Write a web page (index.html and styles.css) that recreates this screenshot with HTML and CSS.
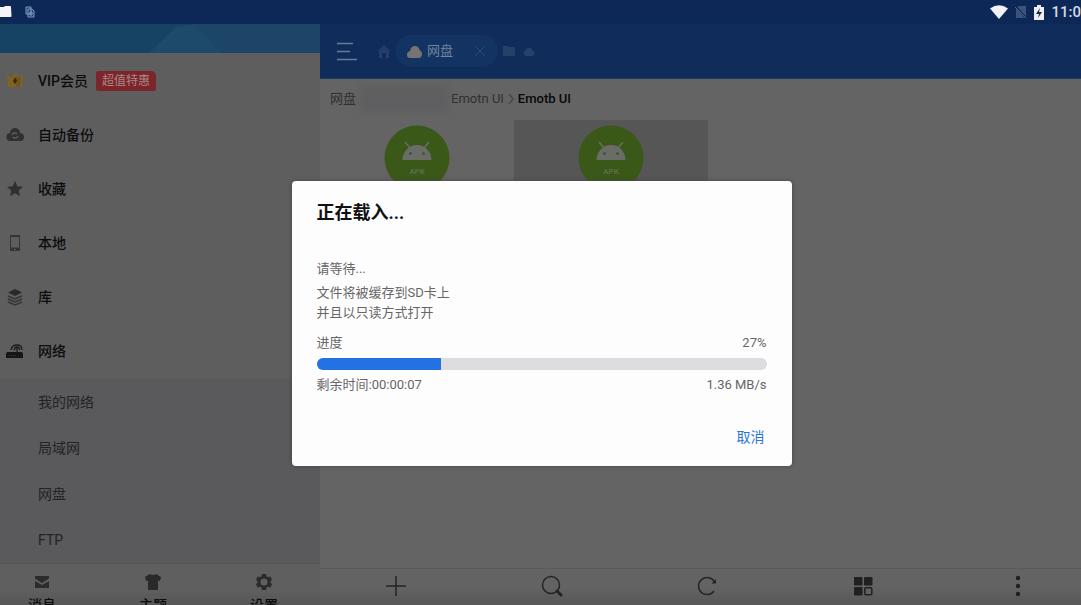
FILE: index.html
```html
<!DOCTYPE html>
<html lang="zh-CN">
<head>
<meta charset="utf-8">
<title>文件管理器</title>
<link rel="stylesheet" href="styles.css">
</head>
<body>
<header class="status">
  <div class="status-left">
    <svg width="12" height="12" viewBox="0 0 12 12"><path d="M0 1h4l1-1h5q1 0 1 1l.5 9q0 1-1 1H0z" fill="#f4f5f9"/></svg>
    <svg width="10" height="12" viewBox="0 0 10 12"><path d="M1 1h5v7H1zM3 3h4l2 2v6H3z" fill="#1c3d6e" stroke="#7f9cc0"/><path d="M5 6h2v3H5z" fill="none" stroke="#7f9cc0"/></svg>
  </div>
  <div class="status-right">
    <svg width="18" height="14" viewBox="0 0 17 14" preserveAspectRatio="none"><path d="M0 3.500Q8.500-3 17 3.500L8.500 14z" fill="#f0f2f8"/></svg>
    <svg width="12" height="14" viewBox="0 0 12 14"><path d="M4 1h7v12H1V4z" fill="#38557d"/><path d="M0 1l12 13" stroke="#0e2856" stroke-width="2"/><path d="M0 2l11 11" stroke="#4b6688"/></svg>
    <svg width="10" height="15" viewBox="0 0 10 15"><path d="M3 0h4v2h3v13H0V2h3z" fill="#eceef4"/><path d="M6 3L2 9h3l-1 4 4-6H5z" fill="#172746"/></svg>
    <span class="clock">11:0</span>
  </div>
</header>
<div class="app">
  <aside class="sidebar">
    <div class="banner"><svg width="100%" height="30" viewBox="0 0 320 30" preserveAspectRatio="none"><path d="M148 30L176 3l20-3 26 30z" fill="#1d496b"/><path d="M196 0h124v30h-98z" fill="#1d4568"/></svg></div>
    <nav class="menu">
      <a href="#"><svg width="18" height="18" viewBox="0 0 18 18"><path d="M1 3l4 3 4-5 4 4 4-3-1 13H2z" fill="#806321"/><path d="M10 4l5 2-1 9h-4z" fill="#6f5528"/><path d="M9 5l2 4-2 3-2-3z" fill="#352a12"/></svg>VIP会员<span class="promo">超值特惠</span></a>
      <a href="#"><svg width="18" height="18" viewBox="0 0 18 18"><path d="M5 15a4 4 0 01-1-8 5 5 0 0110 0 4 4 0 010 8z" fill="#303030"/><path d="M6 9a3 3 0 015-1M12 10a3 3 0 01-5 1" fill="none" stroke="#5d5d5d" stroke-width="1.500"/></svg>自动备份</a>
      <a href="#"><svg width="18" height="18" viewBox="0 0 18 18"><path d="M9 1l2.300 5.200 5.700.6-4.200 3.800 1.200 5.600L9 13.300l-5 2.900 1.200-5.600L1 6.800l5.700-.6z" fill="#303030"/></svg>收藏</a>
      <a href="#"><svg width="18" height="18" viewBox="0 0 18 18"><path fill-rule="evenodd" d="M5 1h8q1 0 1 1v14q0 1-1 1H5q-1 0-1-1V2q0-1 1-1zm0 2v10.500h8V3zm3 12v1h2v-1z" fill="#343434"/></svg>本地</a>
      <a href="#"><svg width="18" height="18" viewBox="0 0 18 18"><path d="M9 1l7 3.500L9 8 2 4.500z" fill="#292929"/><path d="M2 8l7 3 7-3M2 11l7 3 7-3M2 14l7 3 7-3" fill="none" stroke="#363636" stroke-width="1.500"/></svg>库</a>
      <a href="#"><svg width="18" height="18" viewBox="0 0 18 18"><path d="M1 10h15l1 2v4H0v-4z" fill="#151515"/><path d="M5 8q1-5 6-5t5 5M8 8q1-3 3-3t3 3M11 6v5" fill="none" stroke="#1b1b1b" stroke-width="1.300"/><path d="M3 13.500h7" stroke="#333" stroke-dasharray="1 1"/></svg>网络</a>
    </nav>
    <nav class="submenu">
      <a href="#">我的网络</a>
      <a href="#">局域网</a>
      <a href="#">网盘</a>
      <a href="#">FTP</a>
    </nav>
    <div class="side-tabs">
      <button><svg width="16" height="16" viewBox="0 0 16 16"><path d="M1 2h14v2.500L8 9 1 4.500zM1 7l7 4 7-4v7H1z" fill="#2c2c2c"/></svg>消息</button>
      <button><svg width="18" height="16" viewBox="0 0 18 16"><path d="M6 0q3 2 6 0l5 3-1 4-2-.5V16H4V6.500L2 7 1 3z" fill="#292929"/></svg>主题</button>
      <button><svg width="16" height="16" viewBox="0 0 16 16"><path fill-rule="evenodd" d="M6 0h4l.7 2.600 1 .6L14.300 2.500l1.700 3L14.200 8l1.800 2.500-1.700 3-2.600-.7-1 .6L10 16H6l-.7-2.600-1-.6-2.600.7-1.700-3L1.800 8 0 5.500l1.700-3 2.600.7 1-.6zM8 4.500a3.500 3.500 0 100 7 3.500 3.500 0 000-7z" fill="#2b2b2b"/></svg>设置</button>
    </div>
  </aside>
  <main class="main">
    <div class="toolbar">
      <button class="menu-button" aria-label="菜单"><svg width="21" height="20" viewBox="0 0 21 20"><path d="M1 2.500h16M1 10.500h13M1 18.500h20" stroke="#687b96" stroke-width="1.500"/></svg></button>
      <button class="home" aria-label="主页"><svg width="12" height="13" viewBox="0 0 12 13"><path d="M6 0l6 6-1 1v6H8V8H4v5H1V7L0 6z" fill="#243f67"/></svg></button>
      <div class="tab"><svg width="15" height="13" viewBox="0 0 15 13"><path d="M3 13a3 3 0 01-3-3.500Q0 7 3 6 4 1 8 1q3.500 0 4.500 4Q15 6 15 9.500 15 12 12 13z" fill="#777374"/></svg><span>网盘</span><button class="close" aria-label="关闭"><svg width="12" height="12" viewBox="0 0 12 12"><path d="M1 1l10 10M11 1L1 11" stroke="#2b4a70"/></svg></button></div>
      <div class="mini"><svg width="12" height="10" viewBox="0 0 12 10"><path d="M0 0h5l1 1h6v9H0z" fill="#22426a"/></svg><svg width="12" height="10" viewBox="0 0 12 10"><path d="M2.500 10a3 3 0 010-5.500 3.600 3.600 0 017 0 3 3 0 010 5.500z" fill="#22426a"/></svg></div>
    </div>
    <nav class="crumbs">
      <a href="#">网盘</a><span class="hidden-name"></span><a href="#">Emotn UI</a><svg width="6" height="10" viewBox="0 0 6 10"><path d="M1 0l4 5-4 5" fill="none" stroke="#484848" stroke-width="1.500"/></svg><b>Emotb UI</b>
    </nav>
    <div class="files">
      <button class="file" aria-label="APK 文件"><svg width="66" height="66" viewBox="0 0 66 66"><circle cx="33" cy="33" r="32.500" fill="#3a5818"/><path d="M18.500 35a14.500 15 0 0129 0z" fill="#6a6c68"/><path d="M21 17l5 6M45 17l-5 6" stroke="#6a6c68" stroke-width="1.500"/><circle cx="26.500" cy="28.500" r="1.500" fill="#465433"/><circle cx="39.500" cy="28.500" r="1.500" fill="#465433"/><text x="33" y="49" text-anchor="middle" class="apk">APK</text></svg></button>
      <button class="file selected" aria-label="APK 文件"><svg width="66" height="66" viewBox="0 0 66 66"><circle cx="33" cy="33" r="32.500" fill="#3a5818"/><path d="M18.500 35a14.500 15 0 0129 0z" fill="#6a6c68"/><path d="M21 17l5 6M45 17l-5 6" stroke="#6a6c68" stroke-width="1.500"/><circle cx="26.500" cy="28.500" r="1.500" fill="#465433"/><circle cx="39.500" cy="28.500" r="1.500" fill="#465433"/><text x="33" y="49" text-anchor="middle" class="apk">APK</text></svg></button>
    </div>
    <div class="actions">
      <button aria-label="新建"><svg width="22" height="22" viewBox="0 0 22 22"><path d="M11 1v20M1 11h20" stroke="#242424" stroke-width="1.500"/></svg></button>
      <button aria-label="搜索"><svg width="22" height="22" viewBox="0 0 22 22"><circle cx="10" cy="10" r="8.500" fill="none" stroke="#242424" stroke-width="1.500"/><path d="M16 16l4 4" stroke="#242424" stroke-width="3" stroke-linecap="round"/></svg></button>
      <button aria-label="刷新"><svg width="22" height="22" viewBox="0 0 22 22"><path d="M18.500 7a8.500 8.500 0 10-.5 9" fill="none" stroke="#242424" stroke-width="1.500"/><path d="M20 4v4.500h-4.500z" fill="#242424"/></svg></button>
      <button aria-label="窗口"><svg width="22" height="22" viewBox="0 0 22 22"><g fill="#202020"><rect x="2" y="2" width="8.500" height="8.500" rx="1"/><rect x="12" y="2" width="8.500" height="8.500" rx="1"/><rect x="2" y="12" width="8.500" height="8.500" rx="1"/></g><rect x="12.800" y="12.800" width="7" height="7" rx="1" fill="none" stroke="#202020" stroke-width="1.500"/></svg></button>
      <button aria-label="更多"><svg width="22" height="22" viewBox="0 0 22 22"><g fill="#202020"><circle cx="11" cy="3" r="2.200"/><circle cx="11" cy="11" r="2.200"/><circle cx="11" cy="19" r="2.200"/></g></svg></button>
    </div>
  </main>
</div>
<div class="overlay">
  <section class="dialog" role="dialog" aria-labelledby="dialog-title">
    <h1 id="dialog-title">正在载入...</h1>
    <p class="wait">请等待...</p>
    <p class="note">文件将被缓存到SD卡上<br>并且以只读方式打开</p>
    <div class="row"><label for="load">进度</label><span>27%</span></div>
    <progress id="load" max="450" value="124"></progress>
    <div class="row"><span>剩余时间:00:00:07</span><span>1.36 MB/s</span></div>
    <button class="cancel">取消</button>
  </section>
</div>
</body>
</html>
```
FILE: styles.css
```css
* { box-sizing: border-box; }
body {
  margin: 0;
  height: 100vh;
  display: flex;
  flex-direction: column;
  overflow: hidden;
  position: relative;
  background: #646464;
  color: #0c0c0c;
  font-family: Roboto, "Noto Sans CJK SC", sans-serif;
  font-size: 14px;
  line-height: 20px;
}
svg { display: block; flex: none; }
a { color: inherit; text-decoration: none; }
button { border: 0; padding: 0; margin: 0; background: none; color: inherit; font: inherit; }

.status { display: flex; justify-content: space-between; align-items: center; height: 24px; flex: none; background: #0d2856; }
.status-left { display: flex; align-items: center; gap: 13px; }
.status-right { display: flex; align-items: center; gap: 7px; }
.clock { color: #d5d9e4; font-size: 15px; font-weight: 500; }

.app { display: flex; flex: 1; min-height: 0; }
.sidebar { width: 320px; flex: none; display: flex; flex-direction: column; background: #5e5e5e; }
.banner { height: 29px; flex: none; overflow: hidden; background: #164264; }
.menu { padding: 1px 0; }
.menu a { display: flex; align-items: center; height: 54px; padding-left: 6px; font-weight: 500; }
.menu a svg { margin-right: 14px; }
.promo { margin-left: 8px; padding: 0 6px; background: #7c252a; color: #ac8889; border-radius: 2px 5px 2px 2px; font-size: 12px; font-weight: 400; }
.submenu { background: #5a595b; color: #232323; }
.submenu a { display: flex; align-items: center; height: 46px; padding-left: 38px; }
.side-tabs { display: flex; justify-content: space-between; align-items: flex-start; flex: 1; padding: 10px 42px 0 28px; background: linear-gradient(#5f5f5f 50%, #505050); border-top: 1px solid #555; }
.side-tabs button { display: flex; flex-direction: column; align-items: center; gap: 5px; width: 28px; white-space: nowrap; font-weight: 500; }

.main { flex: 1; min-width: 0; display: flex; flex-direction: column; }
.toolbar { display: flex; align-items: center; height: 55px; flex: none; padding-left: 16px; background: #0f2c5b; border-bottom: 1px solid #173e61; }
.home { margin-left: 21px; }
.tab { display: flex; align-items: center; gap: 5px; height: 32px; margin-left: 5px; padding: 0 12px; border-radius: 16px; background: #133462; color: #72849b; font-size: 13px; }
.close { margin-left: 16px; }
.mini { display: flex; gap: 8px; margin-left: 5px; }
.crumbs { display: flex; align-items: center; height: 41px; flex: none; padding: 0 0 2px 10px; font-size: 13px; color: #303030; }
.hidden-name { width: 90px; height: 26px; margin: 0 2px 0 3px; background: #5f5f61; filter: blur(3px); }
.crumbs svg { margin: 0 4px; }
.crumbs b { font-weight: 500; color: #080808; }
.files { display: grid; grid-template-columns: repeat(auto-fill, 194px); align-content: start; flex: 1; }
.file { display: flex; justify-content: center; height: 172px; padding-top: 5px; }
.selected { background: #565656; }
.apk { fill: #5e6c48; font-size: 8px; font-weight: 700; }
.actions { display: flex; align-items: center; justify-content: space-between; height: 37px; flex: none; padding: 0 52px 2px 65px; background: linear-gradient(#636363 50%, #575757); border-top: 1px solid #5a5a5a; }

.overlay { position: absolute; inset: 0; display: flex; align-items: center; justify-content: center; padding: 42px 0 0 2px; }
.dialog { display: flex; flex-direction: column; width: 500px; padding: 20px 25px 19px; border-radius: 4px; background: #fefdfe; color: #666; font-size: 13px; box-shadow: 0 0 4px #444; }
.dialog h1 { margin: 0 0 34px; font-size: 18px; line-height: 24px; font-weight: 700; color: #111; }
.dialog p { margin: 0; }
.note { padding: 4px 0 10px; }
.row { display: flex; justify-content: space-between; }
progress { appearance: none; width: 100%; height: 12px; margin: 5px 0; border: 0; border-radius: 6px; overflow: hidden; background: #dddcdf; }
progress::-webkit-progress-bar { background: #dddcdf; }
progress::-webkit-progress-value { background: #2272e4; }
.dialog .cancel { align-self: flex-end; margin: 32px 2px 0 0; font-size: 14px; color: #2876d8; }
```
